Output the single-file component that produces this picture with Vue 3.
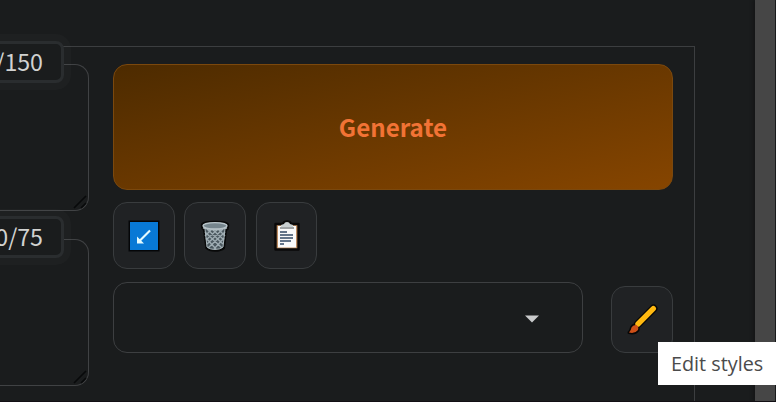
<template>
    <div class="app">
        <main class="page">
            <div class="panel">
                <div class="prompts">
                    <div v-for="prompt in prompts" :key="prompt.name" class="prompt">
                        <span class="counter">{{ prompt.tokens }}</span>
                        <svg class="grip" viewBox="0 0 14 14">
                            <path d="M1 13 L13 1 M8 13 L13 8" />
                        </svg>
                    </div>
                </div>

                <div class="actions">
                    <button class="generate">Generate</button>

                    <div class="tools">
                        <button class="tool" aria-label="Read parameters">
                            <svg width="32" height="32" viewBox="0 0 32 32">
                                <rect x="0.5" y="0.5" width="31" height="31" fill="#050608" />
                                <rect x="2" y="2" width="28" height="28" fill="#0879d6" />
                                <path d="M22 10.5 L11 21.5" stroke="#e4fbff" stroke-width="2.2" fill="none" />
                                <path d="M9 16.5 V23.5 H16 Z" fill="#e4fbff" />
                            </svg>
                        </button>
                        <button class="tool" aria-label="Clear prompt">
                            <svg width="32" height="32" viewBox="0 0 32 32">
                                <path
                                    d="M3 5 Q3 2 16 2 Q29 2 29 5 L28.5 9 L26.8 10 L24.8 28 Q22 30.5 16 30.5 Q10 30.5 7.5 28 L5.2 10 L3.4 8 Z"
                                    fill="#a7b4b9" stroke="#080909" stroke-width="2.4" stroke-linejoin="round"
                                />
                                <path d="M6 9 H26 L24 27 Q21 29.5 16 29.5 Q11 29.5 8 27 Z" fill="#4b585f" />
                                <path
                                    d="M6 12 L23 28 M8 9 L24 24 M13 9 L25 20 M19 9 L26 16 M7 18 L17 29 M26 12 L9 28 M24 9 L8 24 M19 9 L7 20 M13 9 L6 16 M25 18 L15 29"
                                    stroke="#9eacb2" stroke-width="1.4"
                                />
                                <path d="M6 9 L8 27 Q11 29.5 16 29.5 Q21 29.5 24 27 L26 9" fill="none" stroke="#a7b4b9" stroke-width="1" />
                                <ellipse cx="16" cy="5.8" rx="12" ry="3.2" fill="#75858d" stroke="#b8c4c9" stroke-width="1.4" />
                                <path d="M4 8 Q16 11.5 28 8" fill="none" stroke="#b1bec3" stroke-width="1.3" />
                            </svg>
                        </button>
                        <button class="tool" aria-label="Apply styles">
                            <svg width="32" height="32" viewBox="0 0 32 32">
                                <path
                                    d="M4.5 4 H12 Q13 1.5 16 1.5 Q19 1.5 20 4 H27.5 V29.5 H4.5 Z"
                                    fill="#bd8c61" stroke="#090808" stroke-width="2.4" stroke-linejoin="round"
                                />
                                <rect x="7" y="6" width="18" height="21.5" fill="#fafafa" />
                                <path d="M10 7 V5 L13 4 Q13.5 2 16 2 Q18.5 2 19 4 L22 5 V7 Z" fill="#c9cfd0" />
                                <path d="M9 8 H23" stroke="#65696b" stroke-width="1.2" />
                                <path d="M9 12 H16 M9 15 H22 M9 18 H22 M9 21 H20 M9 24 H13" stroke="#344a64" stroke-width="1.3" />
                            </svg>
                        </button>
                    </div>

                    <div class="styles">
                        <div class="select">
                            <svg width="14" height="8" viewBox="0 0 14 8">
                                <path d="M0 0.5 H14 L7 7.5 Z" fill="#c9cacb" />
                            </svg>
                        </div>
                        <div class="edit">
                            <button class="tool" aria-label="Edit styles">
                                <svg width="32" height="32" viewBox="0 0 32 32">
                                    <g stroke="#070707" stroke-linecap="round" stroke-linejoin="round">
                                        <path d="M12 20 L27.5 4.5" stroke-width="8" />
                                        <path d="M3 28.5 Q5 26.5 5.5 23.5 Q7 20.5 10.5 21 Q13 22.5 12 26 Q9 30 3 28.5 Z" stroke-width="3" />
                                    </g>
                                    <path d="M12 20 L27.3 4.7" stroke="#ffb910" stroke-width="5.4" stroke-linecap="round" />
                                    <path d="M3 28.5 Q5 26.5 5.5 23.5 Q7 20.5 10.5 21 Q13 22.5 12 26 Q9 30 3 28.5 Z" fill="#ce5019" />
                                </svg>
                            </button>
                            <span class="tooltip">Edit styles</span>
                        </div>
                    </div>
                </div>
            </div>
        </main>
        <div class="scrollbar"></div>
    </div>
</template>

<script setup>
// Data
const prompts = [
    { name: 'prompt', tokens: '/150' },
    { name: 'negative', tokens: '0/75' }
]
</script>

<style>
body {
    margin: 0;
    background: #1a1c1d;
}
</style>

<style scoped>
.app {
    display: flex;
    box-sizing: border-box;
    width: 776px;
    height: 402px;
    overflow: hidden;
    border-bottom: 1px solid #120f14;
    background: #1a1c1d;
    font-family: "Noto Sans CJK SC", "Open Sans", sans-serif;
}

.page {
    flex: 1;
    display: flex;
    padding-top: 46px;
}

.panel {
    box-sizing: border-box;
    display: flex;
    gap: 24px;
    width: 695px;
    padding: 17px 21px 0 0;
    border-top: 1px solid #3c3e40;
    border-right: 1px solid #3c3e40;
}

.prompts {
    display: flex;
    flex-direction: column;
    gap: 28px;
    width: 89px;
}

.prompt {
    position: relative;
    box-sizing: border-box;
    height: 147px;
    border: 1px solid #404244;
    border-left: 0;
    border-radius: 0 14px 14px 0;
}

.counter {
    position: absolute;
    top: -24px;
    left: -20px;
    right: 24px;
    box-sizing: border-box;
    height: 42px;
    padding-right: 18px;
    border: 3px solid #2a2d2f;
    border-radius: 8px;
    background: #1a1c1d;
    box-shadow: 0 0 0 7px rgba(255, 255, 255, 0.018);
    color: #d1d2d1;
    font-size: 23.2px;
    line-height: 34px;
    text-align: right;
    white-space: nowrap;
}

.grip {
    position: absolute;
    right: 1px;
    bottom: 1px;
    width: 14px;
    height: 14px;
    fill: none;
    stroke: #08090a;
    stroke-width: 1.6;
}

.actions {
    width: 560px;
}

button {
    display: flex;
    align-items: center;
    justify-content: center;
    box-sizing: border-box;
    margin: 0;
    padding: 0;
    font-family: inherit;
}

.generate {
    width: 100%;
    height: 126px;
    padding-bottom: 1px;
    border: 1px solid #7b480d;
    border-radius: 14px;
    background: linear-gradient(to bottom right, #4d2b00, #864500);
    color: #f27335;
    font-size: 24.2px;
    font-weight: 600;
}

.tools {
    display: flex;
    gap: 9.8px;
    margin-top: 12px;
}

.tool {
    width: 61.6px;
    height: 67px;
    border: 1px solid #393c3e;
    border-radius: 14px;
    background: #202224;
}

.styles {
    display: flex;
    align-items: flex-end;
    justify-content: space-between;
    margin-top: 13px;
}

.select {
    display: flex;
    align-items: center;
    justify-content: flex-end;
    box-sizing: border-box;
    width: 470px;
    height: 71px;
    padding: 2px 43px 0 0;
    border: 1px solid #3d3f41;
    border-radius: 14px;
}

.edit {
    position: relative;
}

.tooltip {
    position: absolute;
    top: 56px;
    right: -103px;
    box-sizing: border-box;
    width: 118px;
    height: 43px;
    padding-left: 13px;
    background: #fff;
    color: #4b4b4b;
    font-family: "Open Sans", "Noto Sans", sans-serif;
    font-size: 19.8px;
    line-height: 43px;
    white-space: nowrap;
}

.scrollbar {
    width: 20px;
    margin-right: 1px;
    background: #464646;
    box-shadow: -2px 0 3px #151617;
}
</style>
